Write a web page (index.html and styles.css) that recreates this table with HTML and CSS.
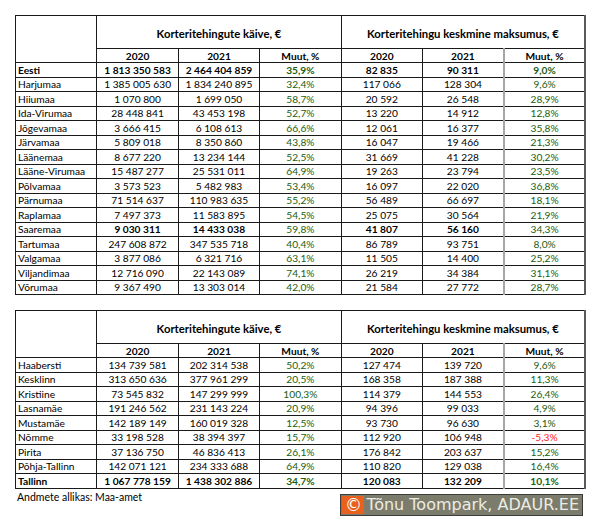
FILE: index.html
```html
<!DOCTYPE html>
<html lang="et">
<head>
<meta charset="utf-8">
<title>Korteritehingud</title>
<link rel="stylesheet" href="styles.css">
</head>
<body>
<div class="page">
  <table class="grid">
    <colgroup><col><col><col><col><col><col><col></colgroup>
    <tr class="title-row">
      <td class="blank" rowspan="2"></td>
      <td colspan="3" class="title">Korteritehingute käive, €</td>
      <td colspan="3" class="title edge">Korteritehingu keskmine maksumus, €</td>
    </tr>
    <tr class="year-row">
      <td>2020</td><td>2021</td><td>Muut, %</td><td>2020</td><td class="soft">2021</td><td class="edge">Muut, %</td>
    </tr>
    <tr class="bold"><td class="name">Eesti</td><td>1 813 350 583</td><td>2 464 404 859</td><td class="pct">35,9%</td><td>82 835</td><td class="soft">90 311</td><td class="pct edge">9,0%</td></tr>
    <tr><td class="name">Harjumaa</td><td>1 385 005 630</td><td>1 834 240 895</td><td class="pct">32,4%</td><td>117 066</td><td class="soft">128 304</td><td class="pct edge">9,6%</td></tr>
    <tr><td class="name">Hiiumaa</td><td>1 070 800</td><td>1 699 050</td><td class="pct">58,7%</td><td>20 592</td><td class="soft">26 548</td><td class="pct edge">28,9%</td></tr>
    <tr><td class="name">Ida-Virumaa</td><td>28 448 841</td><td>43 453 198</td><td class="pct">52,7%</td><td>13 220</td><td class="soft">14 912</td><td class="pct edge">12,8%</td></tr>
    <tr><td class="name">Jõgevamaa</td><td>3 666 415</td><td>6 108 613</td><td class="pct">66,6%</td><td>12 061</td><td class="soft">16 377</td><td class="pct edge">35,8%</td></tr>
    <tr><td class="name">Järvamaa</td><td>5 809 018</td><td>8 350 860</td><td class="pct">43,8%</td><td>16 047</td><td class="soft">19 466</td><td class="pct edge">21,3%</td></tr>
    <tr><td class="name">Läänemaa</td><td>8 677 220</td><td>13 234 144</td><td class="pct">52,5%</td><td>31 669</td><td class="soft">41 228</td><td class="pct edge">30,2%</td></tr>
    <tr><td class="name">Lääne-Virumaa</td><td>15 487 277</td><td>25 531 011</td><td class="pct">64,9%</td><td>19 263</td><td class="soft">23 794</td><td class="pct edge">23,5%</td></tr>
    <tr><td class="name">Põlvamaa</td><td>3 573 523</td><td>5 482 983</td><td class="pct">53,4%</td><td>16 097</td><td class="soft">22 020</td><td class="pct edge">36,8%</td></tr>
    <tr><td class="name">Pärnumaa</td><td>71 514 637</td><td>110 983 635</td><td class="pct">55,2%</td><td>56 489</td><td class="soft">66 697</td><td class="pct edge">18,1%</td></tr>
    <tr><td class="name">Raplamaa</td><td>7 497 373</td><td>11 583 895</td><td class="pct">54,5%</td><td>25 075</td><td class="soft">30 564</td><td class="pct edge">21,9%</td></tr>
    <tr><td class="name">Saaremaa</td><td class="b">9 030 311</td><td class="b">14 433 038</td><td class="pct">59,8%</td><td class="b">41 807</td><td class="soft b">56 160</td><td class="pct edge">34,3%</td></tr>
    <tr><td class="name">Tartumaa</td><td>247 608 872</td><td>347 535 718</td><td class="pct">40,4%</td><td>86 789</td><td class="soft">93 751</td><td class="pct edge">8,0%</td></tr>
    <tr><td class="name">Valgamaa</td><td>3 877 086</td><td>6 321 716</td><td class="pct">63,1%</td><td>11 505</td><td class="soft">14 400</td><td class="pct edge">25,2%</td></tr>
    <tr><td class="name">Viljandimaa</td><td>12 716 090</td><td>22 143 089</td><td class="pct">74,1%</td><td>26 219</td><td class="soft">34 384</td><td class="pct edge">31,1%</td></tr>
    <tr><td class="name">Võrumaa</td><td>9 367 490</td><td>13 303 014</td><td class="pct">42,0%</td><td>21 584</td><td class="soft">27 772</td><td class="pct edge">28,7%</td></tr>
  </table>

  <table class="grid second">
    <colgroup><col><col><col><col><col><col><col></colgroup>
    <tr class="title-row">
      <td class="blank" rowspan="2"></td>
      <td colspan="3" class="title">Korteritehingute käive, €</td>
      <td colspan="3" class="title edge">Korteritehingu keskmine maksumus, €</td>
    </tr>
    <tr class="year-row">
      <td>2020</td><td>2021</td><td>Muut, %</td><td>2020</td><td class="soft">2021</td><td class="edge">Muut, %</td>
    </tr>
    <tr><td class="name">Haabersti</td><td>134 739 581</td><td>202 314 538</td><td class="pct">50,2%</td><td>127 474</td><td class="soft">139 720</td><td class="pct edge">9,6%</td></tr>
    <tr><td class="name">Kesklinn</td><td>313 650 636</td><td>377 961 299</td><td class="pct">20,5%</td><td>168 358</td><td class="soft">187 388</td><td class="pct edge">11,3%</td></tr>
    <tr><td class="name">Kristiine</td><td>73 545 832</td><td>147 299 999</td><td class="pct">100,3%</td><td>114 379</td><td class="soft">144 553</td><td class="pct edge">26,4%</td></tr>
    <tr><td class="name">Lasnamäe</td><td>191 246 562</td><td>231 143 224</td><td class="pct">20,9%</td><td>94 396</td><td class="soft">99 033</td><td class="pct edge">4,9%</td></tr>
    <tr><td class="name">Mustamäe</td><td>142 189 149</td><td>160 019 328</td><td class="pct">12,5%</td><td>93 730</td><td class="soft">96 630</td><td class="pct edge">3,1%</td></tr>
    <tr><td class="name">Nõmme</td><td>33 198 528</td><td>38 394 397</td><td class="pct">15,7%</td><td>112 920</td><td class="soft">106 948</td><td class="pct neg edge">-5,3%</td></tr>
    <tr><td class="name">Pirita</td><td>37 136 750</td><td>46 836 413</td><td class="pct">26,1%</td><td>176 842</td><td class="soft">203 637</td><td class="pct edge">15,2%</td></tr>
    <tr><td class="name">Põhja-Tallinn</td><td>142 071 121</td><td>234 333 688</td><td class="pct">64,9%</td><td>110 820</td><td class="soft">129 038</td><td class="pct edge">16,4%</td></tr>
    <tr class="bold"><td class="name">Tallinn</td><td>1 067 778 159</td><td>1 438 302 886</td><td class="pct">34,7%</td><td>120 083</td><td class="soft">132 209</td><td class="pct edge">10,1%</td></tr>
  </table>

  <div class="footer">
    <span class="source">Andmete allikas: Maa-amet</span>
    <span class="badge"><span class="copy">©</span><span class="owner">Tõnu Toompark, ADAUR.EE</span></span>
  </div>
</div>
</body>
</html>
```
FILE: styles.css
```css
html, body {
  margin: 0;
  padding: 0;
  background: #ffffff;
}
.page {
  padding: 15px 0 0 15px;
  width: 570px;
  font-family: Lato, "Open Sans", sans-serif;
  color: #000;
}
.grid {
  border-collapse: collapse;
  table-layout: fixed;
  width: 570px;
  font-size: 10.2px;
}
.grid col {
  width: 81.4px;
}
.grid td {
  border: 1px solid #1a1a1a;
  padding: 0 2px;
  text-align: center;
  white-space: nowrap;
  line-height: 12px;
  height: 14.5px;
  box-sizing: border-box;
}
.grid td.name {
  text-align: left;
  padding-left: 2px;
}
.grid .title-row td {
  height: 33px;
  font-weight: bold;
  font-size: 11.3px;
  padding-top: 3px;
}
.grid .year-row td {
  font-weight: bold;
  height: 14px;
}
.grid tr.bold td,
.grid td.b {
  font-weight: bold;
}
.grid td.pct {
  color: #1b5e10;
  font-weight: normal;
}
.grid td.neg {
  color: #ff1a1a;
}
.grid td.soft {
  border-right: 2px solid #a6a6a6;
}
.grid td.edge {
  border-right: 2px solid #5a5a5a;
}
.second {
  margin-top: 15px;
}
.footer {
  display: flex;
  justify-content: space-between;
  align-items: flex-start;
  width: 568px;
  padding-top: 1px;
}
.source {
  font-size: 10.5px;
  padding-left: 2px;
  padding-top: 1px;
}
.badge {
  display: flex;
  align-items: stretch;
  margin-top: 4px;
  border: 1px solid #3c3c3c;
  background: #7c7c6c;
  height: 20px;
  font-family: "DejaVu Sans", Verdana, sans-serif;
}
.copy {
  background: #e8611e;
  color: #ffffff;
  width: 22px;
  margin: 1px 2px 1px 1px;
  font-size: 17px;
  line-height: 18px;
  text-align: center;
}
.owner {
  color: #ecece4;
  font-size: 16px;
  line-height: 20px;
  padding-right: 3px;
}
```
